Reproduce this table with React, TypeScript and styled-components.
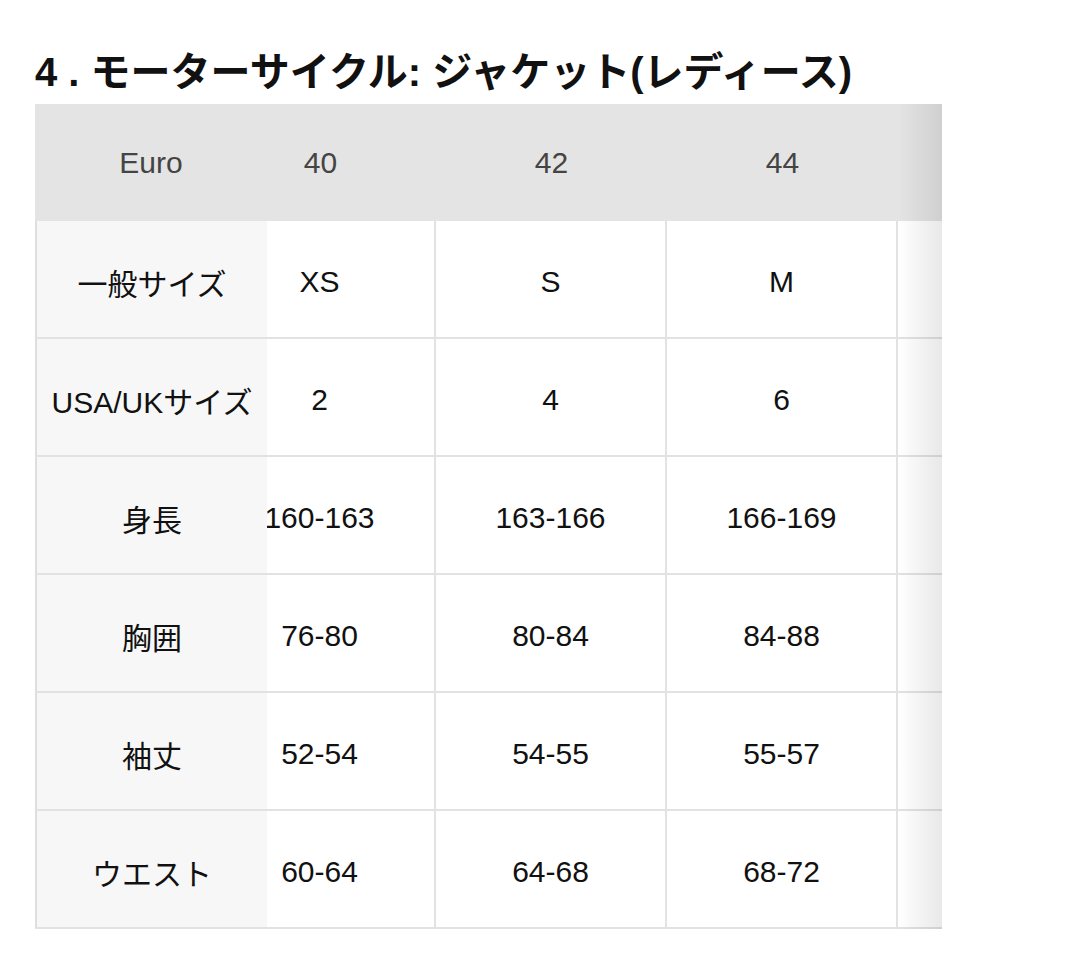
import React, { useLayoutEffect, useRef } from 'react';
import styled, { createGlobalStyle } from 'styled-components';

const GlobalStyle = createGlobalStyle`
  *, *::before, *::after {
    box-sizing: border-box;
  }
  body {
    margin: 0;
    background: #ffffff;
    font-family: "Liberation Sans", Arial, "Noto Sans CJK JP", sans-serif;
  }
`;

const Page = styled.div`
  padding: 49px 0 0 35px;
  width: 1080px;
`;

const Title = styled.h2`
  margin: 0 0 8px;
  font-size: 40px;
  line-height: 47px;
  font-weight: bold;
  color: #111;
  white-space: nowrap;
`;

const TableFrame = styled.div`
  position: relative;
  width: 907px;

  &::after {
    content: '';
    position: absolute;
    top: 0;
    right: 0;
    bottom: 0;
    width: 44px;
    pointer-events: none;
    background: linear-gradient(to right, rgba(0, 0, 0, 0), rgba(0, 0, 0, 0.09));
  }
`;

const Scroller = styled.div`
  overflow-x: auto;
  scrollbar-width: none;

  &::-webkit-scrollbar {
    display: none;
  }
`;

const Table = styled.table`
  border-collapse: separate;
  border-spacing: 0;
  table-layout: fixed;
  width: ${232 + 231 * 3 + 48}px;
  font-size: 30px;
`;

const HeadCell = styled.th<{ $sticky?: boolean; $w: number }>`
  height: 117px;
  width: ${(p) => p.$w}px;
  padding: 0;
  background: #e4e4e4;
  color: #444;
  font-weight: normal;
  text-align: center;
  vertical-align: middle;
  ${(p) => (p.$sticky ? 'position: sticky; left: 0; z-index: 1;' : '')}
`;

const LabelCell = styled.th`
  position: sticky;
  left: 0;
  z-index: 1;
  height: 118px;
  padding: 5px 0 0;
  background: #f7f7f7;
  color: #111;
  font-weight: normal;
  text-align: center;
  vertical-align: middle;
  white-space: nowrap;
  border-left: 2px solid #dedede;
  border-bottom: 2px solid #e2e2e2;
`;

const ValueCell = styled.td<{ $last?: boolean }>`
  height: 118px;
  padding: 5px 0 0;
  background: #fff;
  color: #111;
  text-align: center;
  vertical-align: middle;
  white-space: nowrap;
  border-right: ${(p) => (p.$last ? 'none' : '2px solid #e2e2e2')};
  border-bottom: 2px solid #e2e2e2;
`;

const euro = ['40', '42', '44'];

const rows: { label: string; values: string[] }[] = [
  { label: '一般サイズ', values: ['XS', 'S', 'M'] },
  { label: 'USA/UKサイズ', values: ['2', '4', '6'] },
  { label: '身長', values: ['160-163', '163-166', '166-169'] },
  { label: '胸囲', values: ['76-80', '80-84', '84-88'] },
  { label: '袖丈', values: ['52-54', '54-55', '55-57'] },
  { label: 'ウエスト', values: ['60-64', '64-68', '68-72'] },
];

export default function App() {
  const scrollRef = useRef<HTMLDivElement>(null);

  // the table is shown scrolled a little to the right
  useLayoutEffect(() => {
    if (scrollRef.current) scrollRef.current.scrollLeft = 62;
  }, []);

  return (
    <Page>
      <GlobalStyle />
      <Title>4 . モーターサイクル: ジャケット(レディース)</Title>
      <TableFrame>
        <Scroller ref={scrollRef}>
          <Table>
            <thead>
              <tr>
                <HeadCell $sticky $w={232}>Euro</HeadCell>
                {euro.map((e) => (
                  <HeadCell key={e} $w={231}>{e}</HeadCell>
                ))}
                <HeadCell $w={48} />
              </tr>
            </thead>
            <tbody>
              {rows.map((row) => (
                <tr key={row.label}>
                  <LabelCell>{row.label}</LabelCell>
                  {row.values.map((v, i) => (
                    <ValueCell key={i}>{v}</ValueCell>
                  ))}
                  <ValueCell $last />
                </tr>
              ))}
            </tbody>
          </Table>
        </Scroller>
      </TableFrame>
    </Page>
  );
}
